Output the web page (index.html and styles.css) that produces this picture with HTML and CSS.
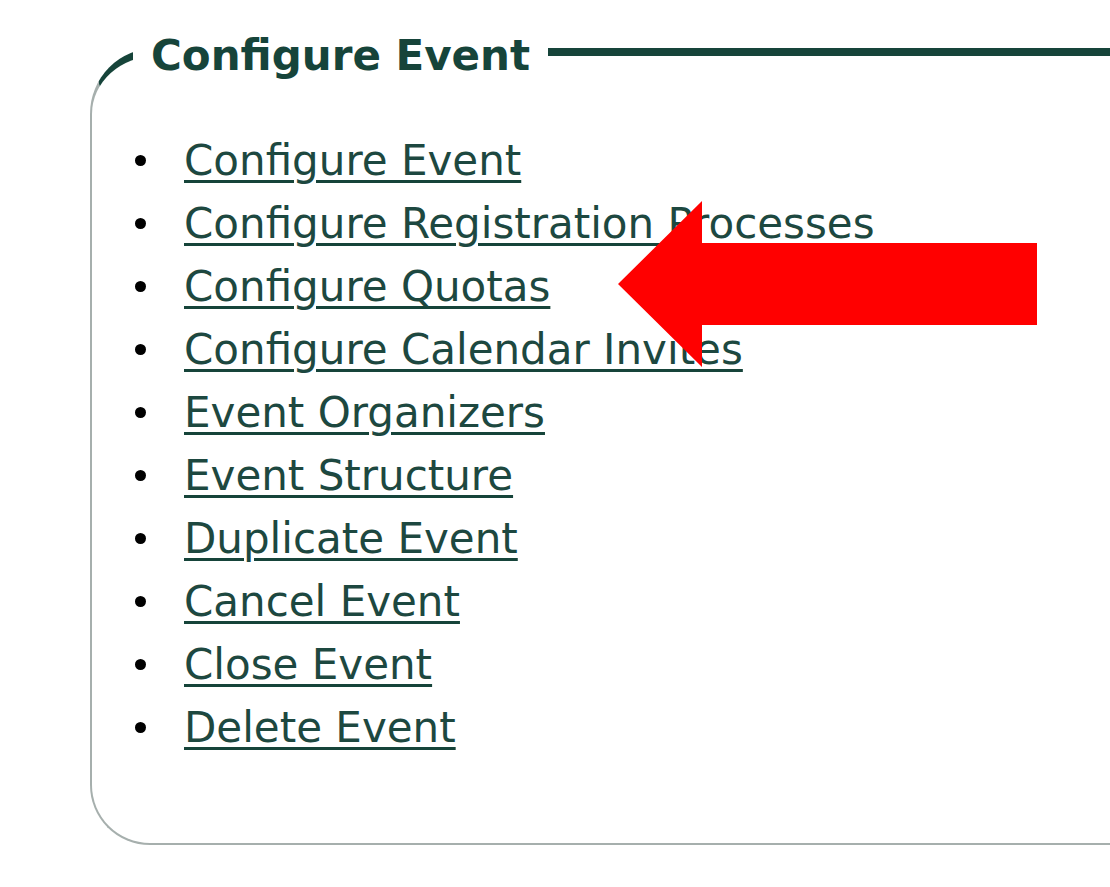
FILE: index.html
```html
<!DOCTYPE html>
<html lang="en">
<head>
<meta charset="utf-8">
<title>Configure Event</title>
<link rel="stylesheet" href="styles.css">
</head>
<body>
<fieldset class="panel">
  <legend class="panel-title">Configure Event</legend>
  <ul class="menu">
    <li><a href="#">Configure Event</a></li>
    <li><a href="#">Configure Registration Processes</a></li>
    <li><a href="#">Configure Quotas</a></li>
    <li><a href="#">Configure Calendar Invites</a></li>
    <li><a href="#">Event Organizers</a></li>
    <li><a href="#">Event Structure</a></li>
    <li><a href="#">Duplicate Event</a></li>
    <li><a href="#">Cancel Event</a></li>
    <li><a href="#">Close Event</a></li>
    <li><a href="#">Delete Event</a></li>
  </ul>
</fieldset>
<svg class="arrow" width="1110" height="887" viewBox="0 0 1110 887" aria-hidden="true">
  <polygon points="618,284 702,201 702,243 1037,243 1037,325 702,325 702,367" fill="#ff0000"/>
</svg>
</body>
</html>
```
FILE: styles.css
```css
html, body {
  margin: 0;
  padding: 0;
  background: #ffffff;
  overflow: hidden;
}
body {
  position: relative;
  width: 1110px;
  height: 887px;
  font-family: "DejaVu Sans", "Liberation Sans", sans-serif;
}
.panel {
  margin: 24px 0 0 90px;
  padding: 0 0 84px 0;
  border-top: 8px solid #16443a;
  border-left: 2px solid #a6afad;
  border-bottom: 2px solid #a6afad;
  border-right: none;
  border-radius: 66px 0 0 60px;
  min-width: 0;
}
.panel-title {
  margin-left: 41px;
  padding: 8px 18px 0 18px;
  font-size: 42px;
  font-weight: bold;
  line-height: 48px;
  color: #16443a;
}
.menu {
  list-style: none;
  margin: 49px 0 0 0;
  padding: 0 0 0 43px;
}
.menu li {
  display: flex;
  align-items: center;
  height: 63px;
  font-size: 42px;
  line-height: 63px;
}
.menu li::before {
  content: "";
  flex: none;
  width: 11px;
  height: 11px;
  border-radius: 50%;
  background: #000000;
  margin-right: 38px;
}
.menu a {
  color: #1d4840;
  text-decoration: underline;
  text-decoration-color: #16443a;
  text-decoration-thickness: 3px;
  text-underline-offset: 5px;
}
.arrow {
  position: absolute;
  left: 0;
  top: 0;
  pointer-events: none;
}
```
